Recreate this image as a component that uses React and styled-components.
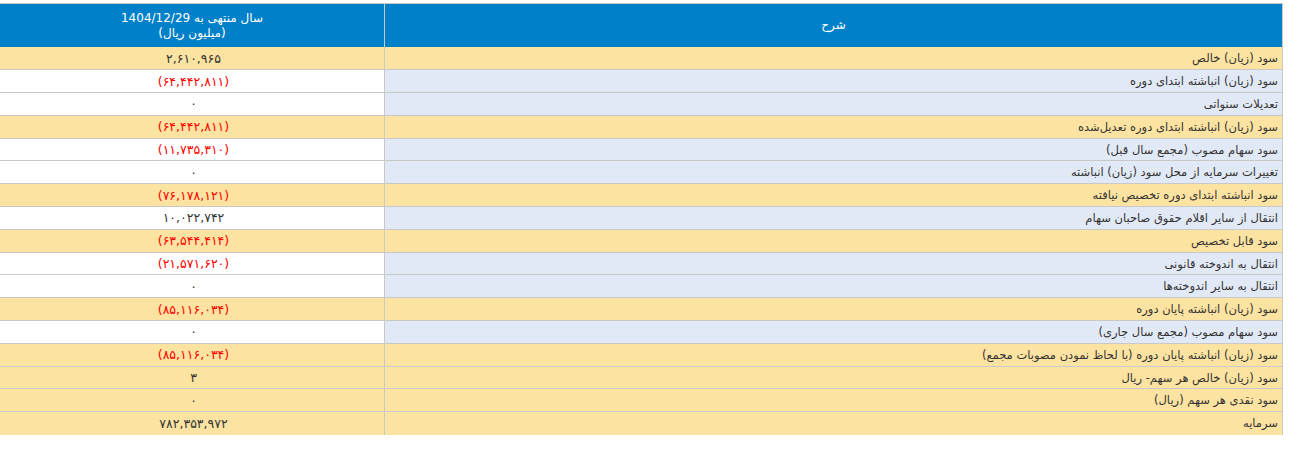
import React from "react";
import styled, { createGlobalStyle } from "styled-components";

const GlobalStyle = createGlobalStyle`
  body {
    margin: 0;
    background: #ffffff;
    font-family: "DejaVu Sans", "Liberation Sans", sans-serif;
  }
`;

const Page = styled.div`
  padding-top: 3px;
  width: 1283px;
`;

const Table = styled.table`
  width: 100%;
  border-collapse: collapse;
  direction: rtl;
  font-size: 11.5px;
  color: #333333;
  border-top: 1px solid #c9c9c9;
  border-right: 1px solid #c9c9c9;
`;

const HeadCell = styled.th`
  background: #0080c8;
  color: #ffffff;
  font-weight: normal;
  font-size: 12px;
  text-align: center;
  height: 43px;
  padding: 0;
  line-height: 15px;
  border-left: ${(p) => (p.$edge ? "none" : "1px solid #c9c9c9")};
  width: ${(p) => p.$width || "auto"};
`;

const Row = styled.tr`
  height: 22.8px;
  border-bottom: 1px solid #c9c9c9;
  &:last-child {
    border-bottom: none;
  }
`;

const Label = styled.td`
  background: ${(p) => (p.$hl ? "#fde3a1" : "#e2e9f6")};
  text-align: right;
  padding: 0 4px;
  border-left: 1px solid #c9c9c9;
  white-space: nowrap;
`;

const Value = styled.td`
  background: ${(p) => (p.$hl ? "#fde3a1" : "#ffffff")};
  color: ${(p) => (p.$neg ? "#ff0000" : "#333333")};
  font-size: 12.5px;
  text-align: center;
  padding: 0 0 0 3px;
`;

const rows = [
  ["سود (زیان) خالص", "۲,۶۱۰,۹۶۵", true],
  ["سود (زیان) انباشته ابتدای دوره", "(۶۴,۴۴۲,۸۱۱)", false],
  ["تعدیلات سنواتی", "۰", false],
  ["سود (زیان) انباشته ابتدای دوره تعدیل‌شده", "(۶۴,۴۴۲,۸۱۱)", true],
  ["سود سهام مصوب (مجمع سال قبل)", "(۱۱,۷۳۵,۳۱۰)", false],
  ["تغییرات سرمایه از محل سود (زیان) انباشته", "۰", false],
  ["سود انباشته ابتدای دوره تخصیص نیافته", "(۷۶,۱۷۸,۱۲۱)", true],
  ["انتقال از سایر اقلام حقوق صاحبان سهام", "۱۰,۰۲۲,۷۴۲", false],
  ["سود قابل تخصیص", "(۶۳,۵۴۴,۴۱۴)", true],
  ["انتقال به اندوخته قانونی", "(۲۱,۵۷۱,۶۲۰)", false],
  ["انتقال به سایر اندوخته‌ها", "۰", false],
  ["سود (زیان) انباشته پایان دوره", "(۸۵,۱۱۶,۰۳۴)", true],
  ["سود سهام مصوب (مجمع سال جاری)", "۰", false],
  ["سود (زیان) انباشته پایان دوره (با لحاظ نمودن مصوبات مجمع)", "(۸۵,۱۱۶,۰۳۴)", true],
  ["سود (زیان) خالص هر سهم- ریال", "۳", true],
  ["سود نقدی هر سهم (ریال)", "۰", true],
  ["سرمایه", "۷۸۲,۳۵۳,۹۷۲", true],
];

export default function App() {
  return (
    <Page>
      <GlobalStyle />
      <Table>
        <thead>
          <tr>
            <HeadCell>شرح</HeadCell>
            <HeadCell $width="384px" $edge>
              سال منتهی به 1404/12/29
              <br />
              (میلیون ریال)
            </HeadCell>
          </tr>
        </thead>
        <tbody>
          {rows.map(([label, value, hl], i) => (
            <Row key={i}>
              <Label $hl={hl}>{label}</Label>
              <Value $hl={hl} $neg={value.startsWith("(")}>
                {value}
              </Value>
            </Row>
          ))}
        </tbody>
      </Table>
    </Page>
  );
}
